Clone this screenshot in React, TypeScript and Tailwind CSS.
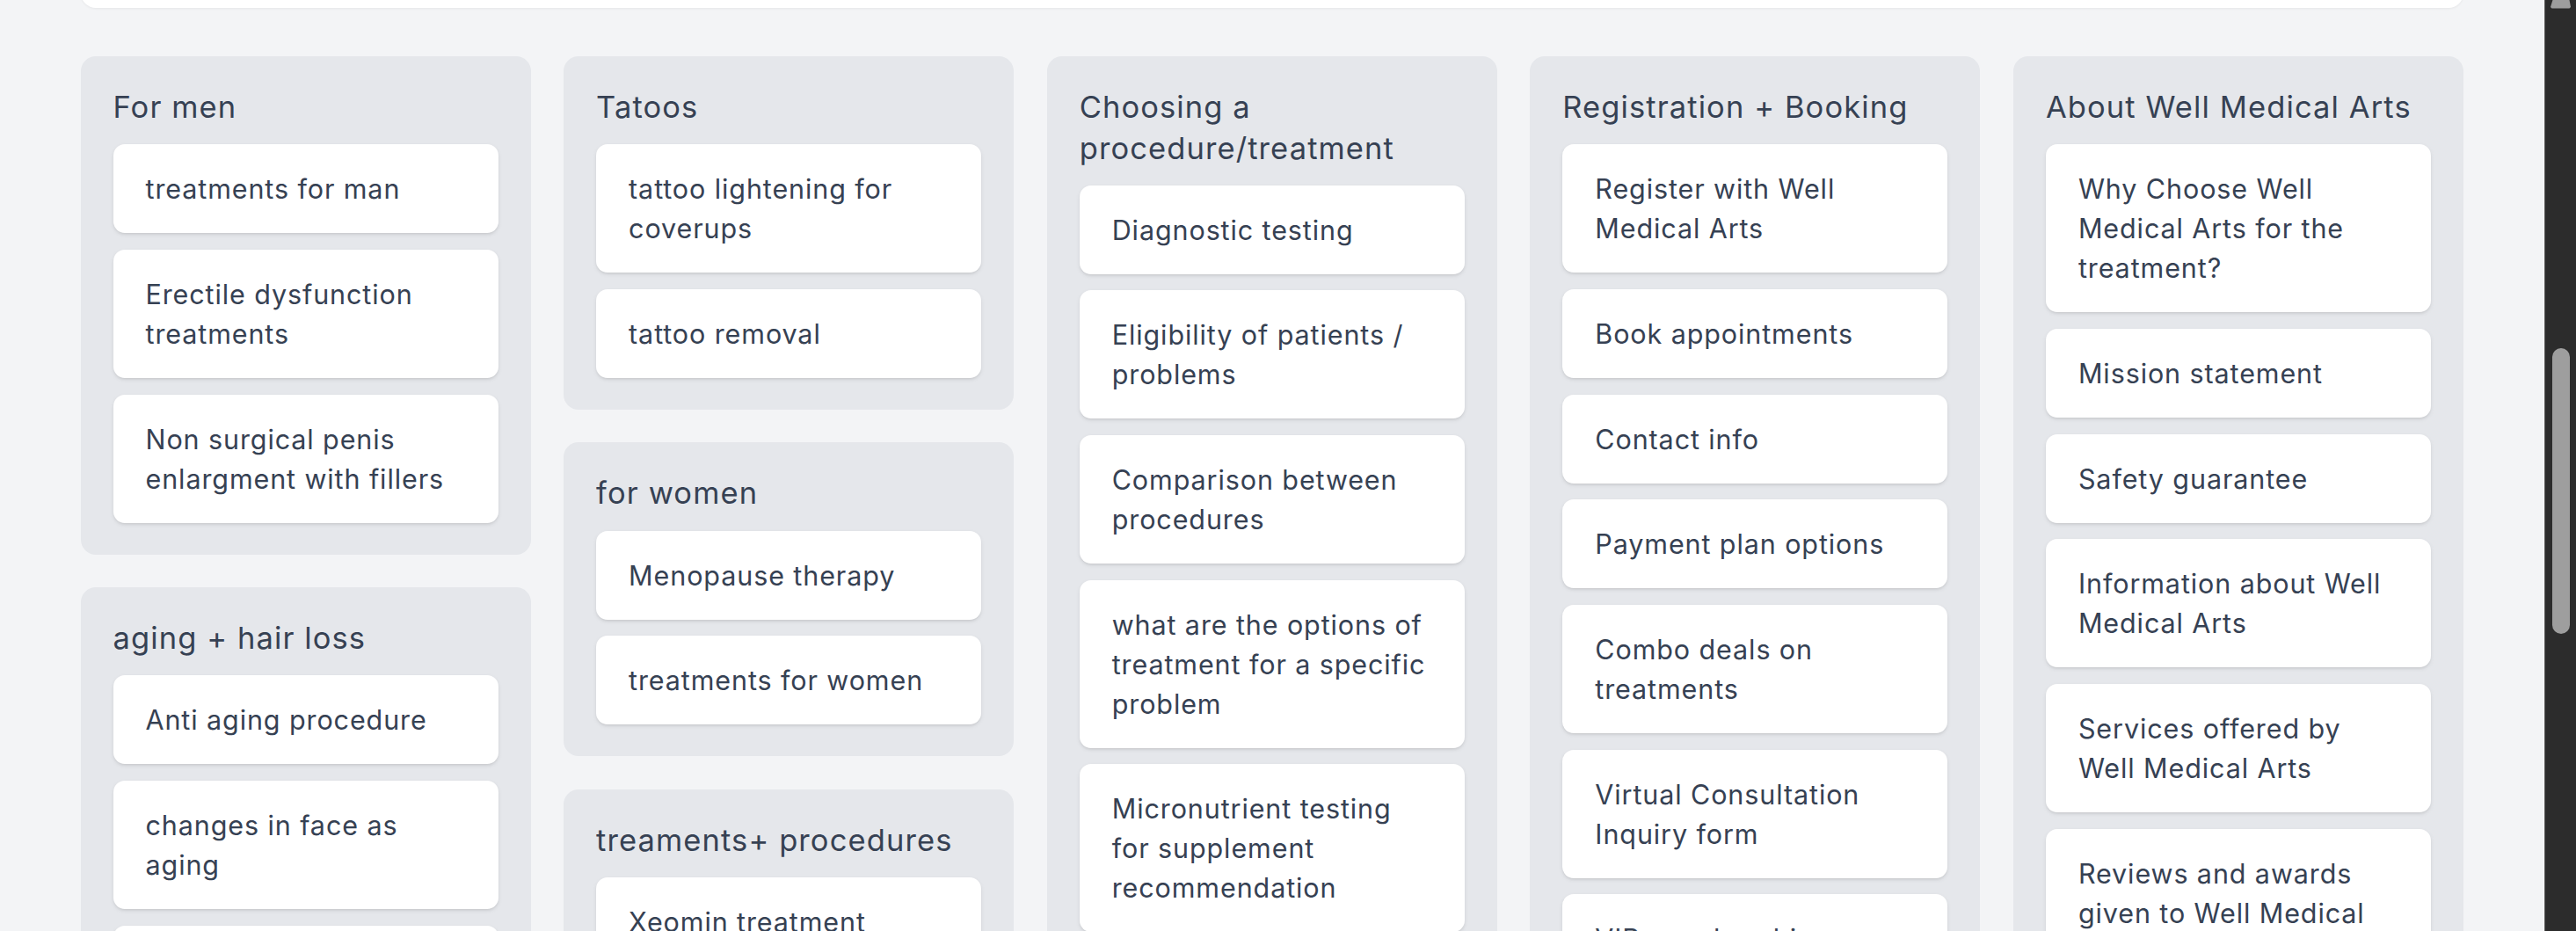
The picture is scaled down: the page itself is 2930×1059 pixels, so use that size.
const sections = [
    [
        {
            title: 'For men',
            items: ['treatments for man', 'Erectile dysfunction treatments', 'Non surgical penis enlargment with fillers']
        },
        {
            title: 'aging + hair loss',
            items: ['Anti aging procedure', 'changes in face as aging', 'Hair loss treatment', 'Hair restoration']
        }
    ],
    [
        {
            title: 'Tatoos',
            items: ['tattoo lightening for coverups', 'tattoo removal']
        },
        {
            title: 'for women',
            items: ['Menopause therapy', 'treatments for women']
        },
        {
            title: 'treaments+ procedures',
            items: ['Xeomin treatment', 'Dermal fillers']
        }
    ],
    [
        {
            title: 'Choosing a procedure/treatment',
            items: [
                'Diagnostic testing',
                'Eligibility of patients / problems',
                'Comparison between procedures',
                'what are the options of treatment for a specific problem',
                'Micronutrient testing for supplement recommendation'
            ]
        }
    ],
    [
        {
            title: 'Registration + Booking',
            items: [
                'Register with Well Medical Arts',
                'Book appointments',
                'Contact info',
                'Payment plan options',
                'Combo deals on treatments',
                'Virtual Consultation Inquiry form',
                'VIP membership'
            ]
        }
    ],
    [
        {
            title: 'About Well Medical Arts',
            items: [
                'Why Choose Well Medical Arts for the treatment?',
                'Mission statement',
                'Safety guarantee',
                'Information about Well Medical Arts',
                'Services offered by Well Medical Arts',
                'Reviews and awards given to Well Medical Arts'
            ]
        }
    ]
];

function Panel({ title, items }) {
    return (
        <div className="flex flex-col gap-[18.7px] rounded-[17px] bg-[#e5e7eb] px-[37px] pt-[35px] pb-[36px]">
            <h3 className="text-[34.5px] leading-[46.5px] font-normal tracking-[1.1px] text-gray-700">{title}</h3>
            {items.map((item) => (
                <div
                    key={item}
                    className="rounded-[13px] bg-white px-[37px] py-[28px] text-[30.5px] leading-[45px] tracking-[0.9px] text-gray-700 shadow-[0_2px_5px_rgba(0,0,0,0.08),0_2px_3px_-1px_rgba(0,0,0,0.08)]"
                >
                    {item}
                </div>
            ))}
        </div>
    );
}

export default function App() {
    return (
        <div
            className="flex h-[1059px] overflow-hidden bg-[#f3f4f6]"
            style={{ fontFamily: 'Inter, "Noto Sans", sans-serif' }}
        >
            <main className="min-w-0 flex-1 pl-[91.5px] pr-[92px]">
                {/* card above, scrolled mostly out of view */}
                <div className="-mt-[100px] h-[109px] rounded-[17px] bg-white shadow-[0_1px_3px_rgba(0,0,0,0.06)]" />

                {/* FAQ categories */}
                <div className="mt-[55px] grid grid-cols-5 items-start gap-[37.5px]">
                    {sections.map((column, i) => (
                        <div key={i} className="flex flex-col gap-[37.5px]">
                            {column.map((panel) => (
                                <Panel key={panel.title} title={panel.title} items={panel.items} />
                            ))}
                        </div>
                    ))}
                </div>
            </main>

            {/* browser scrollbar */}
            <div className="flex w-[36px] shrink-0 flex-col items-center border-l border-[#5c5c5c] bg-[#2c2c2c]">
                <svg width="35" height="10" viewBox="0 0 35 10" className="shrink-0">
                    <polygon points="8.5,0 27.5,0 29,8 27.5,9.5 7.5,9.5 6,8" fill="#9e9e9e" />
                </svg>
                <div className="mt-[386px] h-[325px] w-[20px] rounded-full bg-[#9e9e9e]" />
            </div>
        </div>
    );
}
